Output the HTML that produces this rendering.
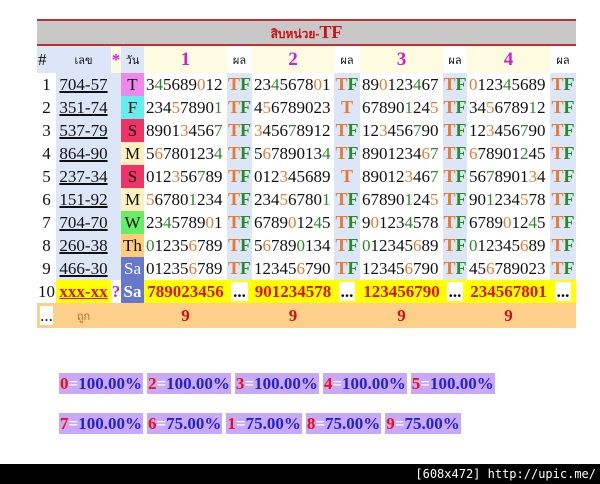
<!DOCTYPE html>
<html><head><meta charset="utf-8"><style>
body{margin:0;width:600px;height:484px;background:#fff;position:relative;overflow:hidden;font-family:"Liberation Serif",serif}
table{position:absolute;left:37px;top:19px;border-collapse:collapse;table-layout:fixed;width:539px}
td{padding:0;height:23px;font-size:17px;white-space:nowrap;overflow:hidden;text-align:center;color:#111}
.title td{height:23px;background:#c8c8c8;border-top:2px solid #c03030;border-bottom:2px solid #c03030;color:#cc1111;font-weight:bold;font-size:12px;font-family:"Liberation Sans","Noto Sans CJK SC",sans-serif}
.hd td{height:27px}
.n{text-align:left;padding-left:1px}
.lek{background:#dde6f7}
.lek u{text-decoration:underline;text-decoration-thickness:2px}
.pl{background:#dde6f7;font-weight:bold;font-size:18px}
.hp{background:#fff;font-size:11px;font-family:"Liberation Sans","Noto Sans CJK SC",sans-serif}
.hn{background:#fffbe0;color:#cc22cc;font-weight:bold;font-size:19px}
.o{color:#e87a30}.g{color:#2a8a2a}
.d{text-align:left;padding-left:2px}
.T{background:#ee88ee}.F{background:#66eeee}.S{background:#ee3366}.M{background:#fff0c0}.W{background:#66ee66}.Th{background:#ffcc77}.Sa{background:#6677cc;color:#fff}
.r10 td{background:#ffff00;color:#dd1111;font-weight:bold}
.ft td{background:#fcd08a;color:#cc1111;font-weight:bold;height:25px}
.wh{background:#fff!important;color:#111!important}
.pct{position:absolute;left:59px;font-weight:bold;font-size:17px}
.pct span{background:#c8a8f8;color:#2222cc;margin-right:4px;padding:1px 1px}
.pct b{color:#ee1111}.pct i{font-style:normal;color:#fff}
.bar{position:absolute;left:0;top:464px;width:600px;height:20px;background:#000;color:#fff;font-family:"DejaVu Sans Mono",monospace;font-size:12px;text-align:right;line-height:20px;padding-right:4px;box-sizing:border-box}
</style></head><body>
<table>
<col style="width:19px"><col style="width:55px"><col style="width:10px"><col style="width:23px"><col style="width:83px"><col style="width:25px"><col style="width:82px"><col style="width:26px"><col style="width:83px"><col style="width:24px"><col style="width:83px"><col style="width:26px">
<tr class="title"><td colspan="12">สิบหน่วย-<span style="font-size:18px;font-family:'Liberation Serif',serif">TF</span></td></tr>
<tr class="hd"><td class="lek n" style="background:#dde6f7">#</td><td class="lek hp" style="background:#dde6f7">เลข</td><td style="background:#fffbe0;color:#cc22cc;font-weight:bold">*</td><td class="hp" style="background:#dde6f7">วัน</td><td class="hn">1</td><td class="hp">ผล</td><td class="hn">2</td><td class="hp">ผล</td><td class="hn">3</td><td class="hp">ผล</td><td class="hn">4</td><td class="hp">ผล</td></tr>
<tr><td>1</td><td class="lek"><u>704-57</u></td><td class="lek"></td><td class="T">T</td><td class="d">3<span class="g">4</span>5689<span class="o">0</span>12</td><td class="pl"><span class="o">T</span><span class="g">F</span></td><td class="d">23<span class="g">4</span>5678<span class="o">0</span>1</td><td class="pl"><span class="o">T</span><span class="g">F</span></td><td class="d">89<span class="o">0</span>123<span class="g">4</span>67</td><td class="pl"><span class="o">T</span><span class="g">F</span></td><td class="d"><span class="o">0</span>123<span class="g">4</span>5689</td><td class="pl"><span class="o">T</span><span class="g">F</span></td></tr>
<tr><td>2</td><td class="lek"><u>351-74</u></td><td class="lek"></td><td class="F">F</td><td class="d">234<span class="o">5</span>7890<span class="g">1</span></td><td class="pl"><span class="o">T</span><span class="g">F</span></td><td class="d">4<span class="o">5</span>6789023</td><td class="pl"><span class="o">T</span></td><td class="d">67890<span class="g">1</span>24<span class="o">5</span></td><td class="pl"><span class="o">T</span><span class="g">F</span></td><td class="d">34<span class="o">5</span>6789<span class="g">1</span>2</td><td class="pl"><span class="o">T</span><span class="g">F</span></td></tr>
<tr><td>3</td><td class="lek"><u>537-79</u></td><td class="lek"></td><td class="S">S</td><td class="d">8901<span class="o">3</span>456<span class="g">7</span></td><td class="pl"><span class="o">T</span><span class="g">F</span></td><td class="d"><span class="o">3</span>456<span class="g">7</span>8912</td><td class="pl"><span class="o">T</span><span class="g">F</span></td><td class="d">12<span class="o">3</span>456<span class="g">7</span>90</td><td class="pl"><span class="o">T</span><span class="g">F</span></td><td class="d">12<span class="o">3</span>456<span class="g">7</span>90</td><td class="pl"><span class="o">T</span><span class="g">F</span></td></tr>
<tr><td>4</td><td class="lek"><u>864-90</u></td><td class="lek"></td><td class="M">M</td><td class="d">5<span class="o">6</span>780123<span class="g">4</span></td><td class="pl"><span class="o">T</span><span class="g">F</span></td><td class="d">5<span class="o">6</span>789013<span class="g">4</span></td><td class="pl"><span class="o">T</span><span class="g">F</span></td><td class="d">8901234<span class="o">6</span><span class="g">7</span></td><td class="pl"><span class="o">T</span><span class="g">F</span></td><td class="d"><span class="o">6</span>78901<span class="g">2</span>45</td><td class="pl"><span class="o">T</span><span class="g">F</span></td></tr>
<tr><td>5</td><td class="lek"><u>237-34</u></td><td class="lek"></td><td class="S">S</td><td class="d">012<span class="o">3</span>56<span class="g">7</span>89</td><td class="pl"><span class="o">T</span><span class="g">F</span></td><td class="d">012<span class="o">3</span>45689</td><td class="pl"><span class="o">T</span></td><td class="d">89012<span class="o">3</span>46<span class="g">7</span></td><td class="pl"><span class="o">T</span><span class="g">F</span></td><td class="d">56<span class="g">7</span>8901<span class="o">3</span>4</td><td class="pl"><span class="o">T</span><span class="g">F</span></td></tr>
<tr><td>6</td><td class="lek"><u>151-92</u></td><td class="lek"></td><td class="M">M</td><td class="d"><span class="o">5</span>6780<span class="g">1</span>234</td><td class="pl"><span class="o">T</span><span class="g">F</span></td><td class="d">234<span class="o">5</span>6780<span class="g">1</span></td><td class="pl"><span class="o">T</span><span class="g">F</span></td><td class="d">67890<span class="g">1</span>24<span class="o">5</span></td><td class="pl"><span class="o">T</span><span class="g">F</span></td><td class="d">90<span class="g">1</span>234<span class="o">5</span>78</td><td class="pl"><span class="o">T</span><span class="g">F</span></td></tr>
<tr><td>7</td><td class="lek"><u>704-70</u></td><td class="lek"></td><td class="W">W</td><td class="d">23<span class="g">4</span>5789<span class="o">0</span>1</td><td class="pl"><span class="o">T</span><span class="g">F</span></td><td class="d">6789<span class="o">0</span>12<span class="g">4</span>5</td><td class="pl"><span class="o">T</span><span class="g">F</span></td><td class="d">9<span class="o">0</span>123<span class="g">4</span>578</td><td class="pl"><span class="o">T</span><span class="g">F</span></td><td class="d">6789<span class="o">0</span>12<span class="g">4</span>5</td><td class="pl"><span class="o">T</span><span class="g">F</span></td></tr>
<tr><td>8</td><td class="lek"><u>260-38</u></td><td class="lek"></td><td class="Th">Th</td><td class="d"><span class="g">0</span>1235<span class="o">6</span>789</td><td class="pl"><span class="o">T</span><span class="g">F</span></td><td class="d">5<span class="o">6</span>789<span class="g">0</span>134</td><td class="pl"><span class="o">T</span><span class="g">F</span></td><td class="d"><span class="g">0</span>12345<span class="o">6</span>89</td><td class="pl"><span class="o">T</span><span class="g">F</span></td><td class="d"><span class="g">0</span>12345<span class="o">6</span>89</td><td class="pl"><span class="o">T</span><span class="g">F</span></td></tr>
<tr><td>9</td><td class="lek"><u>466-30</u></td><td class="lek"></td><td class="Sa">Sa</td><td class="d">01235<span class="o">6</span>789</td><td class="pl"><span class="o">T</span><span class="g">F</span></td><td class="d">12345<span class="o">6</span>790</td><td class="pl"><span class="o">T</span><span class="g">F</span></td><td class="d">12345<span class="o">6</span>790</td><td class="pl"><span class="o">T</span><span class="g">F</span></td><td class="d">45<span class="o">6</span>789023</td><td class="pl"><span class="o">T</span><span class="g">F</span></td></tr>
<tr class="r10"><td class="wh" style="font-weight:normal">10</td><td><u>xxx-xx</u></td><td style="background:#fff;color:#cc22cc">?</td><td class="Sa" style="background:#6677cc;color:#fff">Sa</td><td>789023456</td><td><span style="background:#fff;color:#111;padding:0 2px">...</span></td><td>901234578</td><td><span style="background:#fff;color:#111;padding:0 2px">...</span></td><td>123456790</td><td><span style="background:#fff;color:#111;padding:0 2px">...</span></td><td>234567801</td><td><span style="background:#fff;color:#111;padding:0 2px">...</span></td></tr>
<tr class="ft"><td><span style="background:#fff;color:#111;font-weight:normal">...</span></td><td style="font-size:11px;color:#d06020;font-weight:normal;font-family:'Liberation Sans','Noto Sans CJK SC',sans-serif">ถูก</td><td></td><td></td><td>9</td><td></td><td>9</td><td></td><td>9</td><td></td><td>9</td><td></td></tr>
</table>
<div class="pct" style="top:374px"><span><b>0</b><i>=</i>100.00%</span><span><b>2</b><i>=</i>100.00%</span><span><b>3</b><i>=</i>100.00%</span><span><b>4</b><i>=</i>100.00%</span><span><b>5</b><i>=</i>100.00%</span></div>
<div class="pct" style="top:414px"><span><b>7</b><i>=</i>100.00%</span><span><b>6</b><i>=</i>75.00%</span><span><b>1</b><i>=</i>75.00%</span><span><b>8</b><i>=</i>75.00%</span><span><b>9</b><i>=</i>75.00%</span></div>
<div class="bar">[608x472] http://upic.me/</div>
</body></html>
